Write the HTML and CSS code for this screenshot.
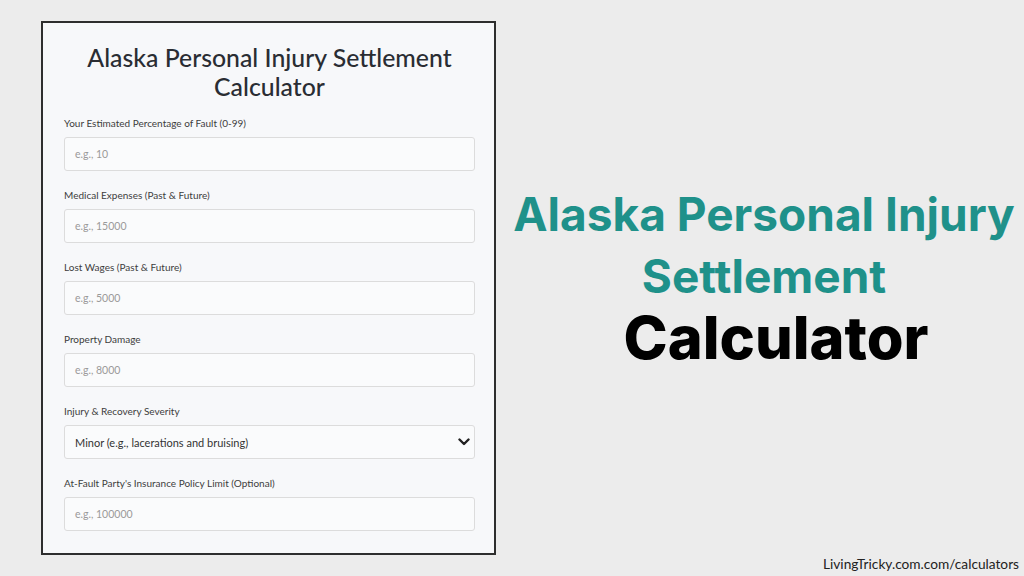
FILE: index.html
```html
<!DOCTYPE html>
<html>
<head>
<meta charset="utf-8">
<link rel="stylesheet" href="styles.css">
</head>
<body>
<div class="page">
  <div class="card">
    <h1 class="card-title">Alaska Personal Injury Settlement Calculator</h1>
    <div class="field">
      <label class="field-label">Your Estimated Percentage of Fault (0-99)</label>
      <div class="input"><span class="ph">e.g., 10</span></div>
    </div>
    <div class="field">
      <label class="field-label">Medical Expenses (Past &amp; Future)</label>
      <div class="input"><span class="ph">e.g., 15000</span></div>
    </div>
    <div class="field">
      <label class="field-label">Lost Wages (Past &amp; Future)</label>
      <div class="input"><span class="ph">e.g., 5000</span></div>
    </div>
    <div class="field">
      <label class="field-label">Property Damage</label>
      <div class="input"><span class="ph">e.g., 8000</span></div>
    </div>
    <div class="field">
      <label class="field-label">Injury &amp; Recovery Severity</label>
      <div class="input select"><span class="val">Minor (e.g., lacerations and bruising)</span>
        <svg class="chev" width="12" height="8" viewBox="0 0 12 8"><path d="M1.5 1.5 L6 6 L10.5 1.5" fill="none" stroke="#222" stroke-width="2.4" stroke-linecap="round" stroke-linejoin="round"/></svg>
      </div>
    </div>
    <div class="field">
      <label class="field-label">At-Fault Party's Insurance Policy Limit (Optional)</label>
      <div class="input"><span class="ph">e.g., 100000</span></div>
    </div>
  </div>
  <div class="hero">
    <div class="hero-teal">Alaska Personal Injury<br>Settlement</div>
    <div class="hero-black">Calculator</div>
  </div>
</div>
<div class="footer">LivingTricky.com.com/calculators</div>
</body>
</html>
```
FILE: styles.css
```css
html, body {
  margin: 0;
  padding: 0;
}
body {
  width: 1024px;
  height: 576px;
  background: #ececec;
  position: relative;
  overflow: hidden;
  font-family: Lato, "Open Sans", sans-serif;
}
.page {
  display: flex;
  align-items: flex-start;
  padding: 21px 0 0 41px;
}
.card {
  box-sizing: border-box;
  width: 455px;
  height: 534px;
  border: 2px solid #2e2e2e;
  background: #f7f8fa;
  padding: 20px 19px 0 21px;
}
.card-title {
  margin: 0 0 15px 0;
  text-align: center;
  font-family: Lato, sans-serif;
  font-weight: 500;
  font-size: 24.8px;
  line-height: 29px;
  color: #2a2d33;
}
.field {
  margin-bottom: 17px;
}
.field-label {
  display: block;
  font-size: 10px;
  line-height: 14px;
  color: #3d3d3d;
  margin-bottom: 7px;
}
.input {
  box-sizing: border-box;
  height: 34px;
  border: 1px solid #dcdcdc;
  border-radius: 3px;
  background: #fafbfc;
  display: flex;
  align-items: center;
  padding: 0 10px;
}
.ph {
  font-size: 10.5px;
  color: #9a9a9a;
}
.select {
  justify-content: space-between;
  padding-right: 4px;
}
.val {
  font-size: 11px;
  color: #333;
}
.hero {
  flex: 1;
  display: flex;
  flex-direction: column;
  align-items: center;
  margin-top: 162px;
  padding-left: 8px;
}
.hero-teal {
  text-align: center;
  font-family: Inter, sans-serif;
  font-weight: 700;
  font-size: 46px;
  line-height: 62px;
  color: #1f918a;
  white-space: nowrap;
}
.hero-black {
  font-family: Inter, sans-serif;
  font-weight: 800;
  font-size: 59.5px;
  line-height: 60px;
  color: #000;
  padding-left: 24px;
}
.footer {
  position: absolute;
  right: 5px;
  bottom: 4px;
  font-family: Lato, sans-serif;
  font-size: 13.7px;
  color: #222;
}
```
